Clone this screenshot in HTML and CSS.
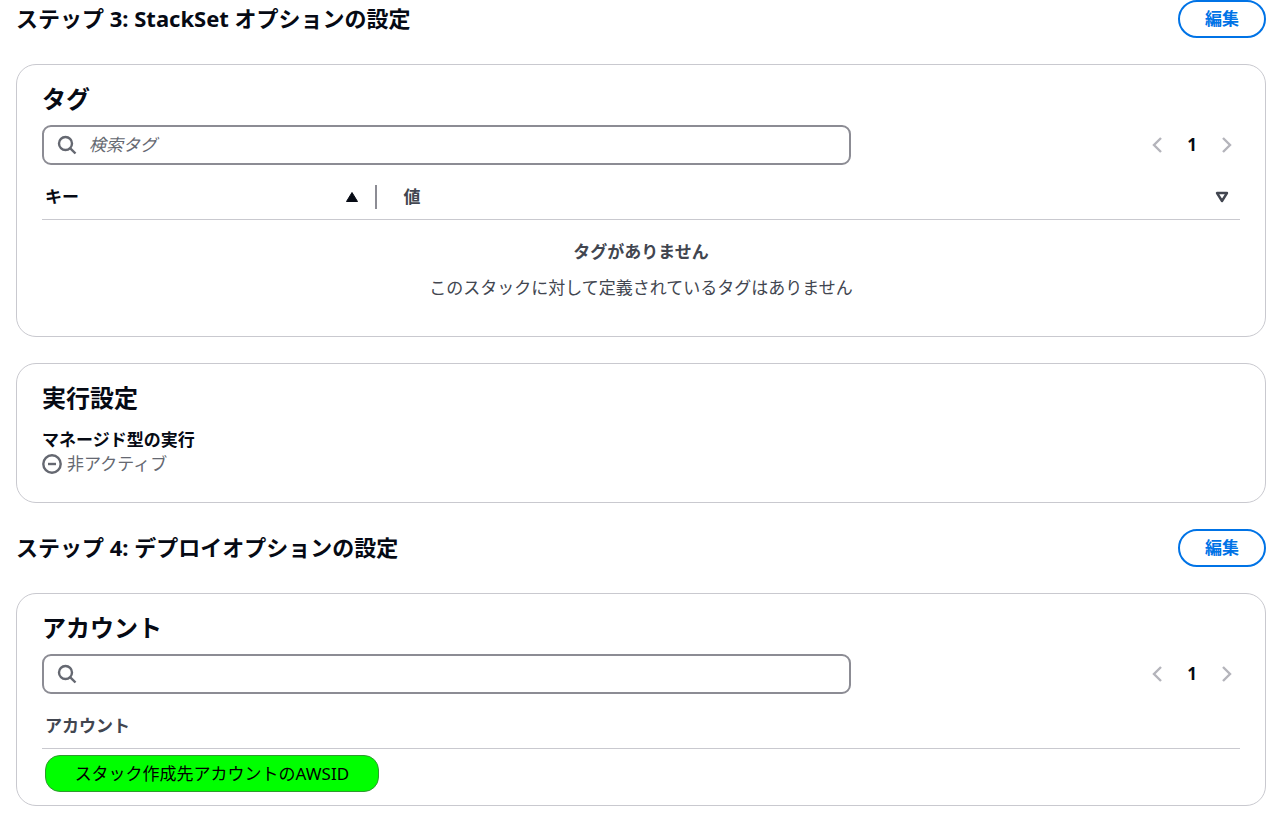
FILE: index.html
```
<!DOCTYPE html>
<html lang="ja">
<head>
    <meta charset="UTF-8">
    <meta name="viewport" content="width=device-width, initial-scale=1.0">
    <title>StackSet の確認</title>
    <link rel="stylesheet" href="styles.css">
</head>
<body>
    <main class="review">

        <!-- STEP 3 -->
        <header class="step">
            <h2 class="step-title">ステップ 3: StackSet オプションの設定</h2>
            <button type="button" class="edit">編集</button>
        </header>

        <section class="card">
            <h3 class="card-title">タグ</h3>
            <div class="tools">
                <label class="search">
                    <svg class="search-icon" viewBox="0 0 20 20" aria-hidden="true"><circle cx="8.5" cy="8.5" r="6.5"/><path d="M13.3 13.3 18.5 18.5"/></svg>
                    <input type="search" class="search-input" placeholder="検索タグ" aria-label="検索タグ">
                </label>
                <nav class="pages" aria-label="タグのページ">
                    <button type="button" class="page-arrow" aria-label="前のページ" disabled><svg viewBox="0 0 12 18"><path d="M10 2 3 9l7 7"/></svg></button>
                    <button type="button" class="page-number">1</button>
                    <button type="button" class="page-arrow" aria-label="次のページ" disabled><svg viewBox="0 0 12 18"><path d="m2 2 7 7-7 7"/></svg></button>
                </nav>
            </div>
            <table class="list">
                <thead>
                    <tr>
                        <th class="col-key sorted" aria-sort="ascending">
                            <div class="head split"><span>キー</span><svg class="caret" viewBox="0 0 14 12"><path class="solid" d="M7 1.5 12.500 10.5h-11z"/></svg></div>
                        </th>
                        <th>
                            <div class="head indent"><span>値</span><svg class="caret" viewBox="0 0 14 12"><path d="M2 2h10L7 10z"/></svg></div>
                        </th>
                    </tr>
                </thead>
                <tbody>
                    <tr>
                        <td class="empty" colspan="2">
                            <strong>タグがありません</strong>
                            <p>このスタックに対して定義されているタグはありません</p>
                        </td>
                    </tr>
                </tbody>
            </table>
        </section>

        <section class="card">
            <h3 class="card-title">実行設定</h3>
            <dl class="setting">
                <dt>マネージド型の実行</dt>
                <dd><svg class="status-icon" viewBox="0 0 20 20" aria-hidden="true"><circle cx="10" cy="10" r="8.7"/><path d="M6 10h8"/></svg>非アクティブ</dd>
            </dl>
        </section>

        <!-- STEP 4 -->
        <header class="step">
            <h2 class="step-title">ステップ 4: デプロイオプションの設定</h2>
            <button type="button" class="edit">編集</button>
        </header>

        <section class="card">
            <h3 class="card-title">アカウント</h3>
            <div class="tools">
                <label class="search">
                    <svg class="search-icon" viewBox="0 0 20 20" aria-hidden="true"><circle cx="8.5" cy="8.5" r="6.5"/><path d="M13.3 13.3 18.5 18.5"/></svg>
                    <input type="search" class="search-input" aria-label="アカウントを検索">
                </label>
                <nav class="pages" aria-label="アカウントのページ">
                    <button type="button" class="page-arrow" aria-label="前のページ" disabled><svg viewBox="0 0 12 18"><path d="M10 2 3 9l7 7"/></svg></button>
                    <button type="button" class="page-number">1</button>
                    <button type="button" class="page-arrow" aria-label="次のページ" disabled><svg viewBox="0 0 12 18"><path d="m2 2 7 7-7 7"/></svg></button>
                </nav>
            </div>
            <table class="list">
                <thead>
                    <tr><th><div class="head">アカウント</div></th></tr>
                </thead>
                <tbody>
                    <tr><td class="account"><span class="account-id">スタック作成先アカウントのAWSID</span></td></tr>
                </tbody>
            </table>
        </section>

    </main>
</body>
</html>
```
FILE: styles.css
```
*{ padding: 0; margin: 0; box-sizing: border-box; }

:root{
    --text: #060a14;
    --text-soft: #424650;
    --text-muted: #656871;
    --field: #8c8c94;
    --line: #c9c9cf;
    --blue: #0073e6;
}

body{
    background-color: white;
    color: var(--text);
    font-family: "Noto Sans", "Noto Sans CJK JP", sans-serif;
    font-size: 17px;
    line-height: 24px;
}
button, input{ font: inherit; }
svg{
    fill: none;
    stroke: currentColor;
    stroke-width: 2;
}

.review{
    display: flex;
    flex-direction: column;
    gap: 26px;
    padding: 0 14px 16px 16px;
}


/*   STEP HEADERS   */

.step{
    display: flex;
    justify-content: space-between;
    align-items: flex-start;
}
.step-title{
    font-size: 22px;
    line-height: 36px;
}
.edit{
    height: 38px;
    padding: 0 25px;
    border: 2px solid var(--blue);
    border-radius: 19px;
    background-color: white;
    color: var(--blue);
    font-weight: bold;
}


/*   CARDS   */

.card{
    padding: 16px 25px 0;
    border: 1px solid var(--line);
    border-radius: 20px;
}
.card-title{
    font-size: 24px;
    line-height: 36px;
}

.tools{
    display: flex;
    justify-content: space-between;
    align-items: center;
    margin-top: 8px;
}
.search{
    display: flex;
    align-items: center;
    gap: 12px;
    width: 67.5%;
    height: 40px;
    padding: 0 13px;
    border: 2px solid var(--field);
    border-radius: 9px;
}
.search-icon{
    flex: none;
    width: 20px;
    height: 20px;
    color: var(--text-muted);
    stroke-width: 2.4;
}
.search-input{
    flex: 1;
    min-width: 0;
    border: 0;
    outline: 0;
    background: none;
    color: var(--text);
}
.search-input::placeholder{
    color: var(--text-muted);
    font-style: italic;
}

.pages{
    display: flex;
    align-items: center;
    gap: 12px;
    padding-right: 6px;
}
.pages button{
    border: 0;
    background: none;
}
.page-arrow{
    display: flex;
    justify-content: center;
    width: 14px;
    color: #b4b4bb;
}
.page-arrow svg{
    width: 12px;
    height: 18px;
    stroke-width: 2.4;
}
.page-number{
    width: 32px;
    color: var(--text);
    font-weight: bold;
}


/*   TABLES   */

.list{
    width: 100%;
    border-collapse: collapse;
    table-layout: fixed;
}
.list th{
    padding: 20px 0 10px;
    border-bottom: 1px solid var(--line);
    color: var(--text-soft);
    text-align: left;
}
.list .sorted{ color: var(--text); }
.col-key{ width: 28%; }
.head{
    display: flex;
    justify-content: space-between;
    align-items: center;
    height: 24px;
    padding: 0 11px 0 3px;
}
.split{
    padding-right: 16px;
    border-right: 2px solid var(--field);
}
.indent{ padding-left: 26px; }
.caret{
    width: 14px;
    height: 12px;
    stroke-width: 2.4;
    stroke-linejoin: round;
}
.solid{
    fill: currentColor;
    stroke-width: 1;
}
.empty{
    padding: 20px 0 36px;
    color: var(--text-soft);
    text-align: center;
}
.empty p{ margin-top: 12px; }
.account{ padding: 6px 3px 13px; }
.account-id{
    display: block;
    width: 28%;
    min-width: 300px;
    padding: 5px 0;
    border: 1px solid #2f9a2f;
    border-radius: 15px;
    background-color: #00ff00;
    color: black;
    line-height: 25px;
    text-align: center;
    white-space: nowrap;
}


/*   EXECUTION   */

.setting{ padding: 12px 0 26px; }
.setting dt{ font-weight: bold; }
.setting dd{
    display: flex;
    align-items: center;
    gap: 5px;
    color: var(--text-muted);
}
.status-icon{
    width: 20px;
    height: 20px;
    stroke-width: 2.4;
}
```
